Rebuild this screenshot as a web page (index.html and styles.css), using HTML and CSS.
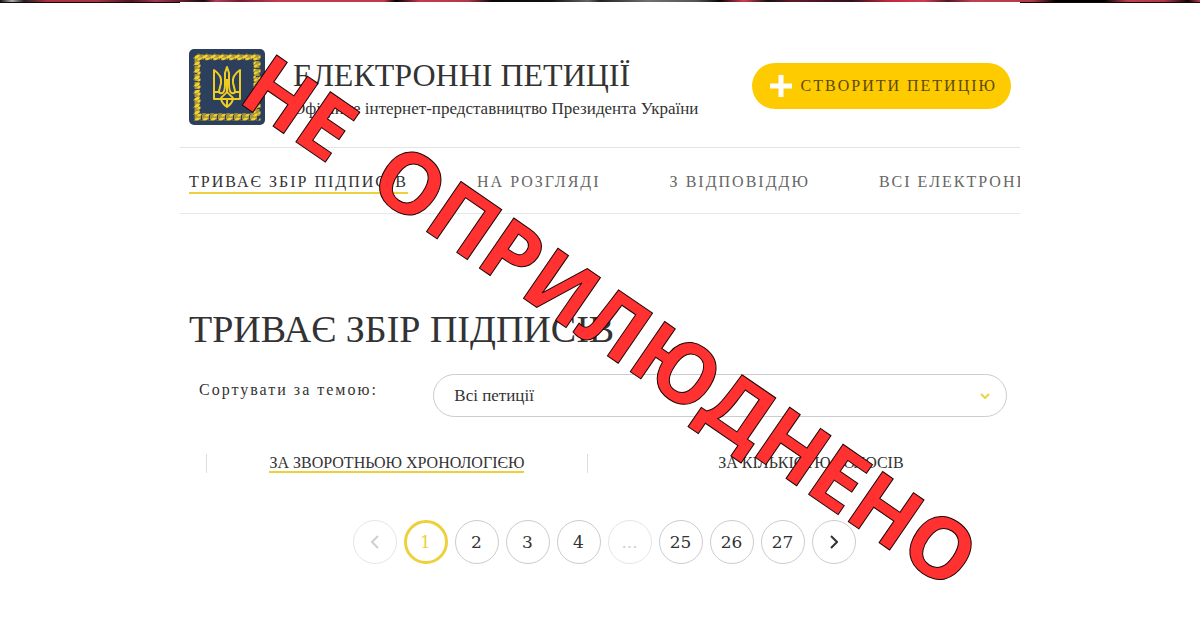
FILE: index.html
```html
<!DOCTYPE html>
<html lang="uk">

<head>
    <meta charset="utf-8">
    <meta name="viewport" content="width=device-width, initial-scale=1.0">

    <title>Електронні петиції</title>

    <link rel="stylesheet" href="styles.css">

</head>

<body>
    <div class="strip"></div>

    <div class="page">
        <header class="header">
            <svg class="logo" viewBox="0 0 76 76" aria-hidden="true">
                <defs>
                    <pattern id="leaf" x="5" y="5" width="8" height="7" patternUnits="userSpaceOnUse">
                        <path d="M0 4c1-3 4-4 6-3-1 3-3 4-6 3zM3 6c1-2 3-3 5-2-1 2-3 3-5 2z" fill="#f4d12c" />
                    </pattern>
                </defs>
                <rect width="76" height="76" rx="5" fill="#2c3f5c" />
                <rect x="8" y="8" width="60" height="60" fill="none" stroke="#a8983a" stroke-width="5" stroke-dasharray="7 1" />
                <rect x="8" y="8" width="60" height="60" fill="none" stroke="url(#leaf)" stroke-width="7" />
                <g fill="none" stroke="#f0cc22" stroke-width="2" stroke-linejoin="round">
                    <path d="M25 21v29h7c1 4 3 6 6 8 3-2 5-4 6-8h7V21c-6 4-8 8-7 13l2 8c0 3-4 3-5 0-1-2-1-5-1-8V24l-2-6-2 6v10c0 3 0 6-1 8-1 3-5 3-5 0l2-8c1-5-1-9-7-13z" />
                    <path d="M38 30v12M25 43h6M51 43h-6M32 50c0-4 6-4 6-8 0 4 6 4 6 8zM38 50v8" />
                </g>
            </svg>
            <div class="brand">
                <p class="brand-title">ЕЛЕКТРОННІ ПЕТИЦІЇ</p>
                <p class="brand-sub">Офіційне інтернет-представництво Президента України</p>
            </div>
            <button class="create" type="button">
                <svg viewBox="0 0 22 22" width="22" height="22" aria-hidden="true">
                    <path d="M11 0v22M0 11h22" stroke="#fff" stroke-width="5" />
                </svg>
                СТВОРИТИ ПЕТИЦІЮ
            </button>
        </header>

        <nav class="menu">
            <a class="active" href="#">ТРИВАЄ ЗБІР ПІДПИСІВ</a>
            <a href="#">НА РОЗГЛЯДІ</a>
            <a href="#">З ВІДПОВІДДЮ</a>
            <a href="#">ВСІ ЕЛЕКТРОНН</a>
        </nav>

        <main>
            <h1>ТРИВАЄ ЗБІР ПІДПИСІВ</h1>

            <div class="sort">
                <label for="theme">Сортувати за темою:</label>
                <div class="select">
                    <select id="theme">
                        <option>Всі петиції</option>
                    </select>
                    <svg viewBox="0 0 10 6" width="10" height="6" aria-hidden="true">
                        <path d="M1 1l4 4 4-4" fill="none" stroke="#e8d444" stroke-width="2" />
                    </svg>
                </div>
            </div>

            <div class="tabs">
                <div class="tab"><a class="active" href="#">ЗА ЗВОРОТНЬОЮ ХРОНОЛОГІЄЮ</a></div>
                <div class="tab"><a href="#">ЗА КІЛЬКІСТЮ ГОЛОСІВ</a></div>
            </div>

            <div class="pager">
                <button class="off" type="button" aria-label="Назад">
                    <svg viewBox="0 0 8 14" width="8" height="14" aria-hidden="true">
                        <path d="M7 1L1 7l6 6" fill="none" stroke="currentColor" stroke-width="2" />
                    </svg>
                </button>
                <button class="current" type="button">1</button>
                <button type="button">2</button>
                <button type="button">3</button>
                <button type="button">4</button>
                <button class="off" type="button">...</button>
                <button type="button">25</button>
                <button type="button">26</button>
                <button type="button">27</button>
                <button type="button" aria-label="Вперед">
                    <svg viewBox="0 0 8 14" width="8" height="14" aria-hidden="true">
                        <path d="M1 1l6 6-6 6" fill="none" stroke="currentColor" stroke-width="2" />
                    </svg>
                </button>
            </div>
        </main>

        <div class="stamp">НЕ&nbsp; ОПРИЛЮДНЕНО</div>
    </div>

</body>

</html>
```
FILE: styles.css
```css
* {
    box-sizing: border-box;
}

body {
    margin: 0;
    background: #fff;
    color: #333;
    font-family: "Liberation Serif", serif;
    font-size: 17px;
    overflow-x: hidden;
}

p,
h1 {
    margin: 0;
    font-weight: normal;
}

a {
    color: inherit;
    text-decoration: none;
}

.strip {
    height: 3px;
    border-bottom: 1px solid #1a0509;
    background: linear-gradient(90deg, #111 0, #aaa 1%, #222 2%, #b03040 4%, #a53545 8%, #4a1520 11%, #a03a50 13%, #20080c 17%, #b04058 18%, #701c34 20%, #c03a4c 23%, #c03a4c 32%, #000 33%, #c83a4c 35%, #b03848 39%, #080808 41%, #111 46%, #666 49%, #222 50%, #707070 54%, #555 58%, #080505 60%, #d04050 62%, #111 64%, #601828 66%, #301020 71%, #c02838 74%, #d03a50 77%, #501828 79%, #c04050 81%, #b03a48 86%, #000 88%, #000 92%, #c04050 94%, #b03848 97%, #100508 99%, #b04050 100%);
}

.page {
    position: relative;
    width: 70%;
    margin: -1px auto 0;
    background: #fff;
    overflow: hidden;
    white-space: nowrap;
}

.header {
    display: flex;
    align-items: center;
    padding: 47px 9px 22px;
    border-bottom: 1px solid #e4e4e4;
}

.logo {
    width: 76px;
    height: 76px;
    margin-right: 28px;
}

.brand {
    padding-top: 4px;
}

.brand-title {
    font-size: 32px;
    line-height: 36px;
}

.brand-sub {
    margin-top: 4px;
    line-height: 24px;
}

.create {
    display: flex;
    align-items: center;
    gap: 9px;
    height: 46px;
    margin: 0 0 2px auto;
    padding: 0 14px 0 18px;
    border: 0;
    border-radius: 23px;
    background: #fecb00;
    color: #5c4a08;
    font: inherit;
    font-size: 16px;
    letter-spacing: 2px;
}

.menu {
    display: flex;
    gap: 69px;
    padding: 23px 9px 19px;
    border-bottom: 1px solid #e8e8e8;
    color: #666;
    font-size: 16px;
    letter-spacing: 2px;
}

.menu a {
    line-height: 21px;
    border-bottom: 2px solid transparent;
}

.menu .active,
.tabs .active {
    color: #333;
    border-bottom: 2px solid #ecd03c;
}

h1 {
    padding: 93px 9px 0;
    font-size: 38px;
    line-height: 44px;
}

.sort {
    display: flex;
    gap: 20px;
    margin-top: 23px;
    padding: 0 13px 0 19px;
}

.sort label {
    flex: 1;
    font-size: 16px;
    line-height: 32px;
    letter-spacing: 2px;
}

.select {
    position: relative;
    width: 71%;
}

.select select {
    display: block;
    width: 100%;
    height: 43px;
    padding: 0 20px;
    border: 1px solid #ccc;
    border-radius: 22px;
    background: #fff;
    color: #333;
    font: inherit;
    appearance: none;
}

.select svg {
    position: absolute;
    top: 19px;
    right: 17px;
}

.tabs {
    display: grid;
    grid-template-columns: 46fr 54fr;
    margin: 37px -14px 0 26px;
    font-size: 16px;
    line-height: 18px;
}

.tab {
    border-left: 1px solid #ddd;
    text-align: center;
}

.tab a {
    display: inline-block;
    height: 19px;
}

.pager {
    display: flex;
    justify-content: center;
    gap: 7px;
    margin: 47px 0 60px 8px;
}

.pager button {
    display: flex;
    align-items: center;
    justify-content: center;
    width: 44px;
    height: 44px;
    padding: 0;
    border: 1px solid #ccc;
    border-radius: 50%;
    background: #fff;
    color: #333;
    font-family: "DejaVu Serif", serif;
    font-size: 17px;
}

.pager .current {
    border: 3px solid #ecd03c;
    color: #ecd03c;
}

.pager .off {
    border-color: #e6e6e6;
    color: #d0d0d0;
}

/* red stamp across the whole page */
.stamp {
    position: absolute;
    top: 51%;
    left: calc(50% + 12px);
    transform: translate(-50%, -50%) rotate(34.5deg);
    font-family: "Noto Sans", "Open Sans", sans-serif;
    font-size: 85px;
    font-weight: bold;
    line-height: 114px;
    color: #ff3131;
    -webkit-text-stroke: 1px #1a0000;
    pointer-events: none;
}
```
